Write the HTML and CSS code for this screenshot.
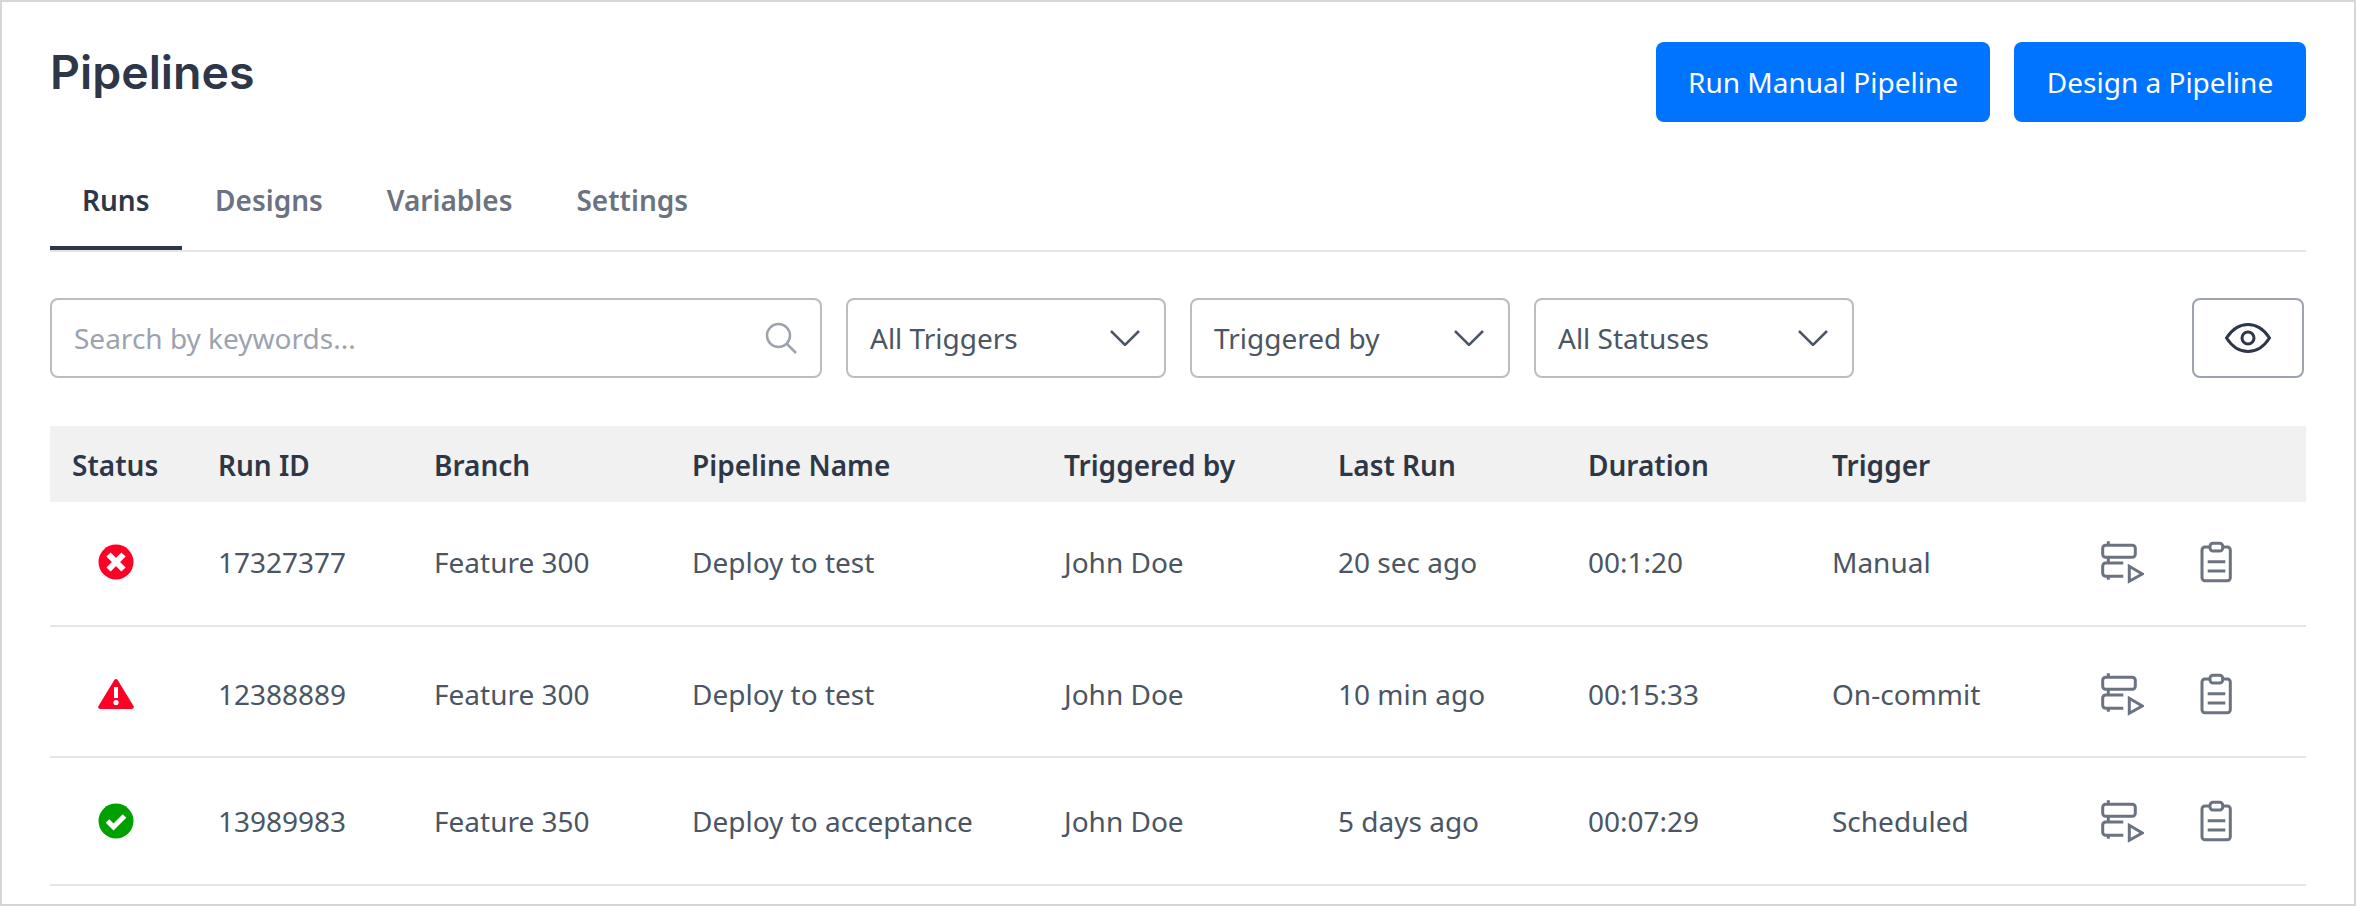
FILE: index.html
```html
<!DOCTYPE html>
<html lang="en">
<head>
  <meta charset="UTF-8">
  <title>Pipelines</title>
  <link rel="stylesheet" href="styles.css">
</head>
<body>
  <div class="page">
    <header class="top">
      <h1>Pipelines</h1>
      <div class="top-actions">
        <button class="btn btn-run">Run Manual Pipeline</button>
        <button class="btn btn-design">Design a Pipeline</button>
      </div>
    </header>

    <nav class="tabs">
      <a class="tab active">Runs</a>
      <a class="tab">Designs</a>
      <a class="tab">Variables</a>
      <a class="tab">Settings</a>
    </nav>

    <div class="filters">
      <div class="field search">
        <span class="placeholder">Search by keywords...</span>
        <svg class="search-icon" viewBox="0 0 32 32"><circle cx="13.5" cy="13.5" r="11.5"/><path d="M22 22l9 9"/></svg>
      </div>
      <div class="field select">
        <span>All Triggers</span>
        <svg class="chevron" viewBox="0 0 30 16"><path d="M1 1l14 14L29 1"/></svg>
      </div>
      <div class="field select">
        <span>Triggered by</span>
        <svg class="chevron" viewBox="0 0 30 16"><path d="M1 1l14 14L29 1"/></svg>
      </div>
      <div class="field select">
        <span>All Statuses</span>
        <svg class="chevron" viewBox="0 0 30 16"><path d="M1 1l14 14L29 1"/></svg>
      </div>
      <button class="eye-btn">
        <svg class="eye" viewBox="0 0 46 30"><path d="M1.5 15C7 6.5 14.5 1.5 23 1.5S39 6.5 44.500 15C39 23.500 31.500 28.500 23 28.500S7 23.500 1.500 15Z"/><circle cx="23" cy="15" r="6"/></svg>
      </button>
    </div>

    <table class="runs">
      <colgroup>
        <col class="c-status"><col class="c-id"><col class="c-branch"><col class="c-name"><col class="c-by"><col class="c-last"><col class="c-dur"><col class="c-trigger"><col class="c-actions">
      </colgroup>
      <thead>
        <tr>
          <th>Status</th><th>Run ID</th><th>Branch</th><th>Pipeline Name</th><th>Triggered by</th><th>Last Run</th><th>Duration</th><th>Trigger</th><th></th>
        </tr>
      </thead>
      <tbody>
        <tr class="row-1">
          <td class="status">
            <svg class="status-icon" viewBox="0 0 36 36"><circle cx="18" cy="18" r="17.500" fill="#ff0026"/><path d="M10.500 10.500l15 15M25.500 10.500l-15 15" stroke="#fff" stroke-width="6" fill="none"/></svg>
          </td>
          <td>17327377</td><td>Feature 300</td><td>Deploy to test</td><td>John Doe</td><td>20 sec ago</td><td>00:1:20</td><td>Manual</td>
          <td class="actions">
            <svg class="act act-flow" viewBox="0 0 44 44"><path d="M8.300 1.300v4M8.300 17.300V23M8.300 36.300v3.400M5.700 5.300h26.600a3 3 0 0 1 3 3v6a3 3 0 0 1-3 3H5.700a3 3 0 0 1-3-3v-6a3 3 0 0 1 3-3ZM23.300 23H5.700a3 3 0 0 0-3 3v7.300a3 3 0 0 0 3 3h17.600M29.300 26.300v15L42.300 34Z"/></svg>
            <svg class="act act-clip" viewBox="0 0 34 42"><path d="M11 6H6a3 3 0 0 0-3 3v27.700a3 3 0 0 0 3 3h22.300a3 3 0 0 0 3-3V9a3 3 0 0 0-3-3h-4.600M14 2.300h6.700a3 3 0 0 1 3 3V7a3 3 0 0 1-3 3H14a3 3 0 0 1-3-3V5.300a3 3 0 0 1 3-3ZM8.700 20.700h17.600M8.700 30h17.600"/></svg>
          </td>
        </tr>
        <tr class="row-2">
          <td class="status">
            <svg class="status-icon warn" viewBox="0 0 36 30"><path d="M16.300 1l-15.800 26c-.8 1.400 0 3 1.700 3h31.600c1.700 0 2.500-1.600 1.700-3L19.700 1c-.8-1.300-2.600-1.300-3.400 0Z" fill="#ff0026"/><path d="M16 8h4v11h-4Z" fill="#fff"/><circle cx="18" cy="23.500" r="2.600" fill="#fff"/></svg>
          </td>
          <td>12388889</td><td>Feature 300</td><td>Deploy to test</td><td>John Doe</td><td>10 min ago</td><td>00:15:33</td><td>On-commit</td>
          <td class="actions">
            <svg class="act act-flow" viewBox="0 0 44 44"><path d="M8.300 1.300v4M8.300 17.300V23M8.300 36.300v3.400M5.700 5.300h26.600a3 3 0 0 1 3 3v6a3 3 0 0 1-3 3H5.700a3 3 0 0 1-3-3v-6a3 3 0 0 1 3-3ZM23.300 23H5.700a3 3 0 0 0-3 3v7.300a3 3 0 0 0 3 3h17.600M29.300 26.300v15L42.300 34Z"/></svg>
            <svg class="act act-clip" viewBox="0 0 34 42"><path d="M11 6H6a3 3 0 0 0-3 3v27.700a3 3 0 0 0 3 3h22.300a3 3 0 0 0 3-3V9a3 3 0 0 0-3-3h-4.600M14 2.300h6.700a3 3 0 0 1 3 3V7a3 3 0 0 1-3 3H14a3 3 0 0 1-3-3V5.300a3 3 0 0 1 3-3ZM8.700 20.700h17.600M8.700 30h17.600"/></svg>
          </td>
        </tr>
        <tr class="row-3">
          <td class="status">
            <svg class="status-icon" viewBox="0 0 36 36"><circle cx="18" cy="18" r="17.500" fill="#00a000"/><path d="M9.500 18l6 6L26.500 13" stroke="#fff" stroke-width="5" fill="none"/></svg>
          </td>
          <td>13989983</td><td>Feature 350</td><td>Deploy to acceptance</td><td>John Doe</td><td>5 days ago</td><td>00:07:29</td><td>Scheduled</td>
          <td class="actions">
            <svg class="act act-flow" viewBox="0 0 44 44"><path d="M8.300 1.300v4M8.300 17.300V23M8.300 36.300v3.400M5.700 5.300h26.600a3 3 0 0 1 3 3v6a3 3 0 0 1-3 3H5.700a3 3 0 0 1-3-3v-6a3 3 0 0 1 3-3ZM23.300 23H5.700a3 3 0 0 0-3 3v7.300a3 3 0 0 0 3 3h17.600M29.300 26.300v15L42.300 34Z"/></svg>
            <svg class="act act-clip" viewBox="0 0 34 42"><path d="M11 6H6a3 3 0 0 0-3 3v27.700a3 3 0 0 0 3 3h22.300a3 3 0 0 0 3-3V9a3 3 0 0 0-3-3h-4.600M14 2.300h6.700a3 3 0 0 1 3 3V7a3 3 0 0 1-3 3H14a3 3 0 0 1-3-3V5.300a3 3 0 0 1 3-3ZM8.700 20.700h17.600M8.700 30h17.600"/></svg>
          </td>
        </tr>
      </tbody>
    </table>
  </div>
</body>
</html>
```

FILE: styles.css
```css
:root {
  --dark: #2d3748;
  --text: #4b5563;
  --muted: #6b7280;
  --line: #e5e5e5;
  --field: #bcbcc2;
  --blue: #0073ff;
}
* { box-sizing: border-box; }
html, body { margin: 0; height: 100%; }
body {
  font-family: "Noto Sans", "Open Sans", sans-serif;
  color: var(--text);
  background: #fff;
}
.page {
  height: 906px;
  padding: 40px 48px 0;
  border: 2px solid #d6d6d6;
  overflow: hidden;
}
.top {
  display: flex;
  justify-content: space-between;
  align-items: flex-start;
  height: 80px;
}
h1 {
  margin: 0;
  font-family: Inter, sans-serif;
  font-size: 46.500px;
  line-height: 60px;
  font-weight: 600;
  color: var(--dark);
}
.top-actions { display: flex; gap: 24px; }
.btn {
  height: 80px;
  padding: 0;
  border: 0;
  border-radius: 8px;
  background: var(--blue);
  color: #fff;
  font: 400 28px "Noto Sans", sans-serif;
}
.btn-run { width: 334px; }
.btn-design { width: 292px; }
.tabs {
  display: flex;
  height: 84px;
  margin-top: 46px;
  border-bottom: 2px solid var(--line);
}
.tab {
  height: 84px;
  padding: 13px 32px 0;
  font-size: 28px;
  font-weight: 600;
  line-height: 38px;
  color: var(--muted);
}
.tab.active {
  margin-right: 1.500px;
  color: var(--dark);
  border-bottom: 4px solid var(--dark);
  height: 82px;
}
.filters {
  display: flex;
  align-items: center;
  margin-top: 46px;
}
.field {
  display: flex;
  align-items: center;
  justify-content: space-between;
  height: 80px;
  border: 2px solid var(--field);
  border-radius: 8px;
  font-size: 28px;
}
.search { width: 772px; padding: 0 23px 0 22px; }
.placeholder { color: #9ca3af; }
.select { width: 320px; margin-left: 24px; padding: 0 24px 0 22px; }
.search-icon { width: 32px; height: 32px; }
.search-icon circle, .search-icon path {
  fill: none;
  stroke: #9ca3af;
  stroke-width: 2.500;
}
.chevron { width: 30px; height: 16px; }
.chevron path { fill: none; stroke: var(--text); stroke-width: 2.500; }
.eye-btn {
  display: flex;
  align-items: center;
  justify-content: center;
  width: 112px;
  height: 80px;
  margin-left: auto;
  margin-right: 2px;
  padding: 0;
  background: #fff;
  border: 2px solid #9ca3af;
  border-radius: 8px;
}
.eye { width: 46px; height: 30px; }
.eye path, .eye circle { fill: none; stroke: var(--dark); stroke-width: 3; }

.runs {
  width: 100%;
  margin-top: 48px;
  table-layout: fixed;
  border-collapse: collapse;
  font-size: 28px;
}
.c-status { width: 146px; }
.c-id { width: 216px; }
.c-branch { width: 258px; }
.c-name { width: 372px; }
.c-by { width: 274px; }
.c-last { width: 250px; }
.c-dur { width: 244px; }
.c-trigger { width: 268px; }
.runs thead tr { height: 76px; background: #f1f1f1; }
.runs th {
  padding: 2px 0 0 22px;
  text-align: left;
  font-weight: 600;
  color: var(--dark);
}
.runs td {
  padding: 0 0 0 22px;
  border-bottom: 2px solid var(--line);
  white-space: nowrap;
}
.row-1 { height: 124px; }
.row-1 td { padding-bottom: 3px; }
.row-2 { height: 131px; }
.row-2 td { padding-top: 5px; }
.row-3 { height: 128px; }
.runs td.status { padding-left: 0; padding-right: 14px; }
.status-icon { display: block; width: 36px; height: 36px; margin: 0 auto; }
.status-icon.warn { height: 30px; }
.runs td.actions { padding-left: 22px; }
.act { display: inline-block; vertical-align: middle; fill: none; stroke: var(--muted); stroke-width: 3; }
.act-flow { width: 44px; height: 44px; }
.act-clip { width: 34px; height: 42px; margin-left: 48px; }
```
